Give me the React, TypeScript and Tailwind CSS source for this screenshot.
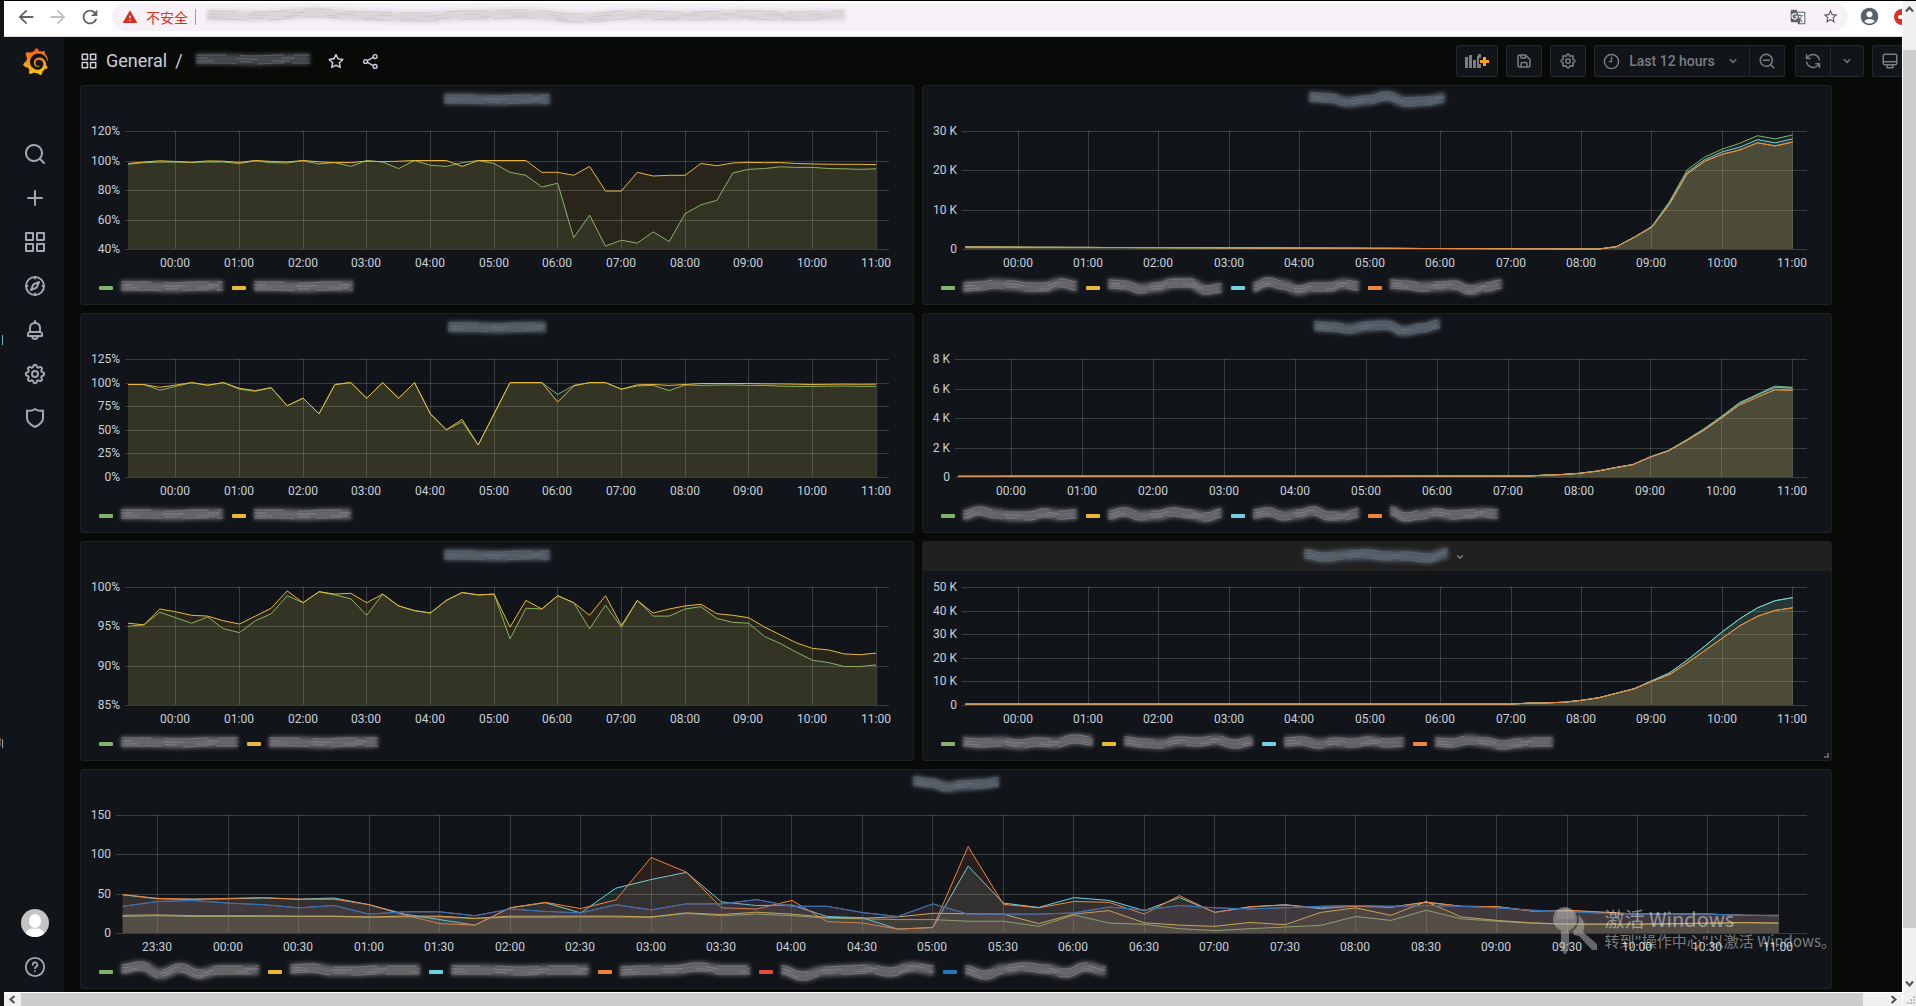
import React, { useLayoutEffect, useRef, useState } from 'react';
import {
  MdAccountCircle,
  MdArrowBack,
  MdArrowForward,
  MdGTranslate,
  MdRefresh,
  MdStarBorder,
  MdWarning,
} from 'react-icons/md';
import { SiGrafana } from 'react-icons/si';

const GREEN = '#7eb26d';
const YELLOW = '#eab839';
const CYAN = '#6ed0e0';
const ORANGE = '#ef843c';
const RED = '#e24d42';
const BLUE = '#1f78c1';

// Every series has one point per 15 minutes, 23:15 to 11:00
const FIRST_POINT = -0.75;
const RANGE_START = -0.797;
const RANGE_HOURS = 12;

type Series = { color: string; values: number[] };
type Tick = { value: number; label: string };
type LegendItem = { color: string; width: number; wave?: number[] };

type PanelConfig = {
  id: string;
  titleWidth: number;
  titleWave?: number[];
  hovered?: boolean;
  left: number;
  min: number;
  max: number;
  ticks: Tick[];
  step?: number;
  series: Series[];
  legend: LegendItem[];
};

const slope = (count: number, from: number, to: number) =>
  Array.from({ length: count }, (_, i) => from + ((to - from) * i) / (count - 1));

const percent = (values: number[]): Tick[] => values.map((value) => ({ value, label: `${value}%` }));
const kilo = (values: number[]): Tick[] =>
  values.map((value) => ({ value, label: value === 0 ? '0' : `${value} K` }));

const rateGreen = [
  97.5, 98.5, 98.9, 98.9, 98.7, 99, 99, 98, 99.8, 98.5, 98.4, 99.8, 97.7, 98.6, 96, 100, 99, 94.5, 100, 96.8, 96, 98.6,
  100, 98, 92, 90, 82, 84.6, 47.6, 63, 42, 46, 44, 51.6, 45, 64, 70, 73, 91.6, 94, 94.6, 95.7, 95.3, 95.3, 94.6, 94.4,
  94, 94.4,
];
const rateYellow = [
  98, 99, 99.8, 99.3, 98.8, 99.7, 99.5, 98.7, 100, 99.4, 99, 100, 99.1, 98.6, 98.6, 99.6, 99.2, 99.5, 100, 100, 100, 96,
  100, 100, 100, 100, 92, 92, 90, 96, 79.3, 79.3, 92, 89.5, 90, 90, 98, 96.5, 98.3, 98.7, 98.5, 98.6, 98, 97.7, 97.5,
  97.4, 97.4, 97.3,
];

const callGreen = [
  98, 98, 92, 96, 100, 97, 100, 93, 90.8, 94.6, 75.5, 83.5, 67, 98, 100, 83.5, 100, 83.5, 100, 67, 50, 58.5, 34, 67, 100,
  100, 100, 87.5, 97, 100, 100, 93, 96.5, 97, 91.5, 97.5, 97, 97.5, 97.5, 97, 97, 96.3, 96, 96, 96.2, 96.4, 96, 96.2,
];
const callYellow = [
  98, 98, 95, 97.5, 100, 97.4, 100, 94, 91.5, 94.6, 75.5, 83.5, 67, 98, 100, 83.5, 100, 83.5, 100, 67, 50, 61, 34, 67,
  100, 100, 100, 79.5, 96.5, 100, 100, 93, 97.7, 98, 97, 98, 99, 99, 99, 99, 98.7, 98.6, 98.3, 98, 98.2, 98.4, 98.2, 98.4,
];

const lossGreen = [
  95, 95.2, 96.8, 96.1, 95.4, 96.2, 94.7, 94.2, 95.7, 96.6, 98.9, 98, 99.4, 99, 98.5, 96.4, 99.1, 97.6, 97, 96.7, 98.3,
  99.3, 99, 99.1, 93.4, 97.3, 97.2, 98.9, 98, 94.7, 97.7, 94.9, 98.3, 96.3, 96.3, 97.2, 97.5, 96, 95.5, 95.4, 93.7, 92.8,
  91.7, 90.7, 90.4, 89.9, 89.9, 90.1,
];
const lossYellow = [
  95.4, 95.2, 97.2, 96.85, 96.4, 96.3, 95.7, 95.3, 96.3, 97.3, 99.5, 98, 99.4, 99.1, 99.2, 98, 99.1, 97.6, 97, 96.7,
  98.3, 99.3, 99, 99.1, 94.9, 98.3, 97.2, 98.9, 98, 96.4, 98.9, 95.1, 98.3, 96.7, 97.2, 97.6, 97.8, 96.6, 96.4, 96.1,
  94.9, 93.9, 92.9, 92.2, 92, 91.5, 91.4, 91.6,
];

const usersHead = [...slope(37, 0.5, 0), 0.6, 3];
const usersLow = [...usersHead, 5.6, 11.4, 19.1, 22.3, 24.1, 25.2, 27, 26.2, 27.2];
const usersMid = [...usersHead, 5.6, 11.7, 19.5, 22.7, 24.7, 25.9, 27.8, 27, 28];
const usersHigh = [...usersHead, 5.8, 12.1, 20.1, 23.4, 25.4, 26.9, 28.8, 28, 29];

const roomsHead = [...slope(33, 0.05, 0.06), 0.12, 0.17, 0.25, 0.4, 0.63, 0.84];
const roomsLow = [...roomsHead, 1.36, 1.76, 2.44, 3.16, 4, 4.88, 5.4, 5.92, 5.88];
const roomsMid = [...roomsHead, 1.36, 1.78, 2.48, 3.22, 4.08, 4.98, 5.54, 6.08, 6.02];
const roomsHigh = [...roomsHead, 1.38, 1.8, 2.5, 3.26, 4.12, 5.04, 5.6, 6.16, 6.08];

const linksHead = [...slope(32, 0.4, 0.4), 0.8, 0.9, 1.2, 2, 3.1, 5, 6.9];
const linksLow = [...linksHead, 10, 12.9, 17.8, 23, 28.3, 33.6, 37.6, 40.1, 41.2];
const linksHigh = [...linksHead, 10.3, 13.6, 19, 24.9, 31, 36.6, 41.2, 44.2, 45.5];

const delayGreen = [
  21, 22, 21, 21, 21, 21, 21, 20, 20.5, 20.5, 18.5, 20, 20, 20.5, 20.5, 20, 25, 22, 24, 22, 19, 18, 17, 17, 15, 15, 8.5,
  23, 12.7, 11, 5.5, 3, 5.5, 7.6, 9.7, 21, 16, 29, 18, 15, 12.5, 11, 11, 11, 11.5, 12.2, 13, 12.5,
];
const delayYellow = [
  22.5, 23, 22, 22, 22, 21.5, 21.5, 20.5, 21.5, 21.5, 18.5, 21.5, 21.5, 21.5, 21.5, 20.5, 25.5, 23.5, 26.5, 24, 20, 19,
  20.5, 25, 24.5, 24, 12, 24, 28.5, 13, 10, 8.5, 13.5, 10.5, 26, 32, 22.5, 40, 20.5, 16, 13, 11.5, 11.5, 11.5, 12, 12.7,
  13.5, 12.7,
];
const delayCyan = [
  48.5, 43.5, 43, 43.5, 44.5, 43, 44.5, 36, 24, 17, 10, 32, 38.5, 25.5, 57, 68, 77, 39.5, 35, 35.5, 21, 19.5, 5, 7, 85,
  38, 32.5, 45, 41.5, 28.5, 45, 26.5, 33, 36, 31, 34.5, 33, 39, 34, 33.5, 28, 28.5, 26, 24, 24, 24, 22.5, 22,
];
const delayOrange = [
  49, 44, 43, 44, 45, 43, 43, 36, 23, 12, 10, 32, 39, 31, 42, 96, 77.5, 32, 30.5, 41.5, 14.5, 12.7, 5, 7, 110, 36.5, 32,
  40, 39, 24, 47.5, 26, 33.5, 35.6, 32, 34, 32.6, 39.4, 34, 33.5, 28, 29, 26.7, 24, 24, 24, 22.5, 22,
];
const delayBlue = [
  34, 40, 41.5, 38, 36, 32, 35, 24, 27, 27, 22, 30.5, 27.5, 25.5, 36, 29.5, 37, 37, 42.5, 34, 34, 26, 21, 37, 24, 24, 24,
  25.5, 33, 29, 35, 32, 30.5, 32, 34, 35, 34, 35, 34, 32, 29, 27.5, 25, 24, 24, 24, 22.5, 22.5,
];

const panels: PanelConfig[] = [
  {
    id: 'rate',
    titleWidth: 108,
    left: 45,
    min: 40,
    max: 120,
    ticks: percent([40, 60, 80, 100, 120]),
    series: [
      { color: GREEN, values: rateGreen },
      { color: YELLOW, values: rateYellow },
    ],
    legend: [
      { color: GREEN, width: 104 },
      { color: YELLOW, width: 101 },
    ],
  },
  {
    id: 'users',
    titleWidth: 138,
    titleWave: [-2, -1, 3, 1, -3, 3, 2, -1],
    left: 40,
    min: 0,
    max: 30,
    ticks: kilo([0, 10, 20, 30]),
    series: [
      { color: GREEN, values: usersHigh },
      { color: YELLOW, values: usersLow },
      { color: CYAN, values: usersMid },
      { color: ORANGE, values: usersLow },
    ],
    legend: [
      { color: GREEN, width: 116, wave: [1, 0, -2, -1, 1, 1, -3, 0] },
      { color: YELLOW, width: 116, wave: [-2, -1, 3, 1, -3, -3, 4, 2] },
      { color: CYAN, width: 108, wave: [1, -4, -1, 4, 1, 1, -2, 0] },
      { color: ORANGE, width: 114, wave: [-2, -1, 1, 0, -1, 4, 1, -2] },
    ],
  },
  {
    id: 'call',
    titleWidth: 100,
    left: 45,
    min: 0,
    max: 125,
    ticks: percent([0, 25, 50, 75, 100, 125]),
    series: [
      { color: GREEN, values: callGreen },
      { color: YELLOW, values: callYellow },
    ],
    legend: [
      { color: GREEN, width: 104 },
      { color: YELLOW, width: 99 },
    ],
  },
  {
    id: 'rooms',
    titleWidth: 128,
    titleWave: [-1, 0, 2, -1, -2, 4, 1, -3],
    left: 33,
    min: 0,
    max: 8,
    ticks: kilo([0, 2, 4, 6, 8]),
    series: [
      { color: GREEN, values: roomsHigh },
      { color: YELLOW, values: roomsLow },
      { color: CYAN, values: roomsMid },
      { color: ORANGE, values: roomsLow },
    ],
    legend: [
      { color: GREEN, width: 116, wave: [1, -3, 0, 2, 2, -1, 1, 0] },
      { color: YELLOW, width: 116, wave: [1, -2, 2, 1, -2, 0, 3, -1] },
      { color: CYAN, width: 108, wave: [0, -2, 2, 0, -3, 2, 2, -1] },
      { color: ORANGE, width: 110, wave: [-3, 3, 1, -1, 1, 0, -1, 0] },
    ],
  },
  {
    id: 'loss',
    titleWidth: 108,
    left: 45,
    min: 85,
    max: 100,
    ticks: percent([85, 90, 95, 100]),
    series: [
      { color: GREEN, values: lossGreen },
      { color: YELLOW, values: lossYellow },
    ],
    legend: [
      { color: GREEN, width: 119 },
      { color: YELLOW, width: 111 },
    ],
  },
  {
    id: 'links',
    titleWidth: 146,
    titleWave: [-1, 2, 0, -1, 1, 1, 3, -2],
    hovered: true,
    left: 40,
    min: 0,
    max: 50,
    ticks: kilo([0, 10, 20, 30, 40, 50]),
    series: [
      { color: GREEN, values: linksHigh },
      { color: YELLOW, values: linksLow },
      { color: CYAN, values: linksHigh },
      { color: ORANGE, values: linksLow },
    ],
    legend: [
      { color: GREEN, width: 132, wave: [0, 1, 0, 2, 0, 1, -3, -1] },
      { color: YELLOW, width: 131, wave: [-1, 1, 2, -1, 0, -2, 2, -1] },
      { color: CYAN, width: 122, wave: [0, -1, 2, 0, 1, -1, 1, 0] },
      { color: ORANGE, width: 120, wave: [0, 1, -2, 0, 3, 1, 0, 0] },
    ],
  },
  {
    id: 'delay',
    titleWidth: 88,
    titleWave: [-2, 0, 4, 2, 1, -1],
    left: 36,
    min: 0,
    max: 150,
    ticks: [0, 50, 100, 150].map((value) => ({ value, label: String(value) })),
    step: 0.5,
    series: [
      { color: GREEN, values: delayGreen },
      { color: YELLOW, values: delayYellow },
      { color: CYAN, values: delayCyan },
      { color: ORANGE, values: delayOrange },
      { color: RED, values: delayBlue },
      { color: BLUE, values: delayBlue },
    ],
    legend: [
      { color: GREEN, width: 140, wave: [-1, -4, 4, -2, 4, 0, 0, 0] },
      { color: YELLOW, width: 132, wave: [-1, -2, 1, 1, 0, 0, 0] },
      { color: CYAN, width: 140 },
      { color: ORANGE, width: 132, wave: [1, 0, 0, -3, 0, 0] },
      { color: RED, width: 155, wave: [0, 6, 1, 0, -1, 2, -3, 0] },
      { color: BLUE, width: 143, wave: [0, 5, -1, -3, -1, 3, -3, 1] },
    ],
  },
];

/* ---------- Smudged-out names ---------- */

const smearTones = {
  legend: { body: '#68676b', streak: '#a09fa3' },
  title: { body: '#56606a', streak: '#737d86' },
  crumb: { body: '#464a50', streak: '#8a9097' },
  url: { body: '#d9d5d9', streak: '#b9b6b9' },
};

function Smear({
  width,
  wave = [0, 0, 1, 0, 0],
  tone = 'legend',
}: {
  width: number;
  wave?: number[];
  tone?: keyof typeof smearTones;
}) {
  const { body, streak } = smearTones[tone];
  const from = 1;
  const gap = (width - from * 2) / (wave.length - 1);
  const line = (dy: number) => {
    const points = wave.map((y, i) => [from + i * gap, 6 + y + dy]);
    let d = `M${points[0][0]},${points[0][1]}`;
    for (let i = 1; i < points.length; i++) {
      const [px, py] = points[i - 1];
      const [x, y] = points[i];
      d += ` C${px + gap / 2},${py} ${x - gap / 2},${y} ${x},${y}`;
    }
    return d;
  };

  return (
    <svg width={width} height={16} className="shrink-0 overflow-visible" fill="none" aria-hidden="true">
      <path d={line(0)} stroke={body} strokeWidth={11} className="blur-[2px]" />
      <g stroke={streak} strokeWidth={1} opacity={0.5} className="blur-[0.5px]">
        <path d={line(-4)} strokeDasharray="30 14 44 9" />
        <path d={line(-1)} strokeDasharray="12 30 20 24" />
        <path d={line(2)} strokeDasharray="18 26 12 20" />
        <path d={line(4)} strokeDasharray="40 22 26 8" />
      </g>
    </svg>
  );
}

/* ---------- Icons ---------- */

const iconPaths = {
  apps: 'M10,13H3a1,1,0,0,0-1,1v7a1,1,0,0,0,1,1h7a1,1,0,0,0,1-1V14A1,1,0,0,0,10,13ZM9,20H4V15H9ZM21,2H14a1,1,0,0,0-1,1v7a1,1,0,0,0,1,1h7a1,1,0,0,0,1-1V3A1,1,0,0,0,21,2ZM20,9H15V4h5Zm1,4H14a1,1,0,0,0-1,1v7a1,1,0,0,0,1,1h7a1,1,0,0,0,1-1V14A1,1,0,0,0,21,13Zm-1,7H15V15h5ZM10,2H3A1,1,0,0,0,2,3v7a1,1,0,0,0,1,1h7a1,1,0,0,0,1-1V3A1,1,0,0,0,10,2ZM9,9H4V4H9Z',
  plus: 'M19,11H13V5a1,1,0,0,0-2,0v6H5a1,1,0,0,0,0,2h6v6a1,1,0,0,0,2,0V13h6a1,1,0,0,0,0-2Z',
  search:
    'M21.71,20.29,18,16.61A9,9,0,1,0,16.61,18l3.68,3.68a1,1,0,0,0,1.42,0A1,1,0,0,0,21.71,20.29ZM11,18a7,7,0,1,1,7-7A7,7,0,0,1,11,18Z',
  searchMinus:
    'M21.71,20.29,18,16.61A9,9,0,1,0,16.61,18l3.68,3.68a1,1,0,0,0,1.42,0A1,1,0,0,0,21.71,20.29ZM11,18a7,7,0,1,1,7-7A7,7,0,0,1,11,18ZM15,10H7a1,1,0,0,0,0,2h8a1,1,0,0,0,0-2Z',
  star: 'M22,9.67A1,1,0,0,0,21.14,9l-5.69-.83L12.9,3a1,1,0,0,0-1.8,0L8.55,8.16,2.86,9a1,1,0,0,0-.81.68,1,1,0,0,0,.25,1l4.13,4-1,5.68A1,1,0,0,0,6.9,21.44L12,18.77l5.1,2.67a.93.93,0,0,0,.46.12,1,1,0,0,0,.59-.19,1,1,0,0,0,.4-1l-1-5.68,4.13-4A1,1,0,0,0,22,9.67Zm-6.15,4a1,1,0,0,0-.29.88l.72,4.2-3.76-2a1.06,1.06,0,0,0-.94,0l-3.76,2,.72-4.2a1,1,0,0,0-.29-.88l-3-3,4.21-.61a1,1,0,0,0,.76-.55L12,5.7l1.88,3.82a1,1,0,0,0,.76.55l4.21.61Z',
  angleDown:
    'M17,9.17a1,1,0,0,0-1.41,0L12,12.71,8.46,9.17a1,1,0,0,0-1.41,0,1,1,0,0,0,0,1.42l4.24,4.24a1,1,0,0,0,1.42,0L17,10.59A1,1,0,0,0,17,9.17Z',
  bell: 'M18,13.18V10a6,6,0,0,0-5-5.91V3a1,1,0,0,0-2,0V4.09A6,6,0,0,0,6,10v3.18A3,3,0,0,0,4,16v2a1,1,0,0,0,1,1H8.14a4,4,0,0,0,7.72,0H19a1,1,0,0,0,1-1V16A3,3,0,0,0,18,13.18ZM8,10a4,4,0,0,1,8,0v3H8Zm4,10a2,2,0,0,1-1.72-1h3.44A2,2,0,0,1,12,20Zm6-3H6V16a1,1,0,0,1,1-1H17a1,1,0,0,1,1,1Z',
  save: 'M20.71,9.29l-6-6a1,1,0,0,0-.32-.21A1.09,1.09,0,0,0,14,3H6A3,3,0,0,0,3,6V18a3,3,0,0,0,3,3H18a3,3,0,0,0,3-3V10A1,1,0,0,0,20.71,9.29ZM9,5h4V7H9Zm6,14H9V16a1,1,0,0,1,1-1h4a1,1,0,0,1,1,1Zm4-1a1,1,0,0,1-1,1H17V16a3,3,0,0,0-3-3H10a3,3,0,0,0-3,3v3H6a1,1,0,0,1-1-1V6A1,1,0,0,1,6,5H7V8A1,1,0,0,0,8,9h6a1,1,0,0,0,1-1V6.41l4,4Z',
  monitor:
    'M19,2H5A3,3,0,0,0,2,5V15a3,3,0,0,0,3,3H7.64l-.58,1a2,2,0,0,0,0,2,2,2,0,0,0,1.75,1h6.46A2,2,0,0,0,17,21a2,2,0,0,0,0-2l-.59-1H19a3,3,0,0,0,3-3V5A3,3,0,0,0,19,2ZM8.77,20,10,18H14l1.2,2ZM20,15a1,1,0,0,1-1,1H5a1,1,0,0,1-1-1V14H20Zm0-3H4V5A1,1,0,0,1,5,4H19a1,1,0,0,1,1,1Z',
};

function Icon({ name, size }: { name: keyof typeof iconPaths; size: number }) {
  return (
    <svg width={size} height={size} viewBox="0 0 24 24" fill="currentColor" aria-hidden="true">
      <path d={iconPaths[name]} />
    </svg>
  );
}

function StrokeIcon({ size, children }: { size: number; children: React.ReactNode }) {
  return (
    <svg
      width={size}
      height={size}
      viewBox="0 0 24 24"
      fill="none"
      stroke="currentColor"
      strokeWidth={2}
      strokeLinecap="round"
      strokeLinejoin="round"
      aria-hidden="true"
    >
      {children}
    </svg>
  );
}

// Eight round lobes
const cogPath = (() => {
  const points: string[] = [];
  for (let a = 0; a < 360; a += 5) {
    const rad = (a * Math.PI) / 180;
    const wave = Math.cos(rad * 8);
    const r = 8.1 + Math.sign(wave) * Math.sqrt(Math.abs(wave)) * 1.1;
    points.push(`${(12 + r * Math.cos(rad)).toFixed(2)},${(12 + r * Math.sin(rad)).toFixed(2)}`);
  }
  return `M${points.join('L')}Z`;
})();

const CogIcon = ({ size }: { size: number }) => (
  <StrokeIcon size={size}>
    <path d={cogPath} />
    <circle cx="12" cy="12" r="3" />
  </StrokeIcon>
);

const CompassIcon = ({ size }: { size: number }) => (
  <StrokeIcon size={size}>
    <circle cx="12" cy="12" r="9" />
    <path d="M16 8l-2.4 5.6L8 16l2.4-5.6z" />
    <path d="M12 3v1.5M12 19.5V21M3 12h1.5M19.5 12H21" />
  </StrokeIcon>
);

const ShieldIcon = ({ size }: { size: number }) => (
  <StrokeIcon size={size}>
    <path d="M12 3C10 4.600 7 5.100 4 4.500V12c0 4.200 3.200 6.800 8 9 4.800-2.200 8-4.800 8-9V4.500C17 5.100 14 4.600 12 3z" />
  </StrokeIcon>
);

const ShareIcon = ({ size }: { size: number }) => (
  <StrokeIcon size={size}>
    <circle cx="18.500" cy="5" r="2.700" />
    <circle cx="5" cy="12" r="2.700" />
    <circle cx="18.500" cy="19" r="2.700" />
    <path d="M7.500 10.700l8.500-4.400M7.500 13.300l8.500 4.400" />
  </StrokeIcon>
);

const ClockIcon = ({ size }: { size: number }) => (
  <StrokeIcon size={size}>
    <circle cx="12" cy="12" r="10" />
    <path d="M12 6v6H9" />
  </StrokeIcon>
);

const SyncIcon = ({ size }: { size: number }) => (
  <StrokeIcon size={size}>
    <path d="M20.500 10.500A9 9 0 0 0 5 6.500L3.500 8.500M3.300 3.500v5h5" />
    <path d="M3.500 13.500A9 9 0 0 0 19 17.500l1.500-2M20.700 20.500v-5h-5" />
  </StrokeIcon>
);

const HelpIcon = ({ size }: { size: number }) => (
  <StrokeIcon size={size}>
    <circle cx="12" cy="12" r="10" />
    <path d="M9.500 9.500a2.500 2.500 0 1 1 3.700 2.200c-.8.400-1.200.9-1.200 1.600M12 16.500v.1" />
  </StrokeIcon>
);

const AddPanelIcon = () => (
  <svg width={26} height={16} viewBox="0 0 26 16" aria-hidden="true">
    <g fill="#7b7d81">
      <rect x="1" y="4" width="3" height="11" />
      <rect x="5" y="2" width="3" height="13" />
      <rect x="9" y="7" width="3" height="8" />
      <path d="M13 3h1v-2h3v4h-2v6h2v4h-4z" />
    </g>
    <path d="M19 4h3v3h3v3h-3v3h-3v-3h-3V7h3z" fill="#f9a01b" />
  </svg>
);

const AvatarIcon = () => (
  <svg width={28} height={28} viewBox="0 0 28 28" className="rounded-full" aria-hidden="true">
    <rect width="28" height="28" fill="#c4c4c4" />
    <ellipse cx="14" cy="12" rx="6" ry="7" fill="#fff" />
    <path d="M4 28c0-6 4-8 7-8.500h6c3 .5 7 2.500 7 8.500z" fill="#fff" />
  </svg>
);

/* ---------- Chart ---------- */

const PLOT_TOP = 16;
const PLOT_HEIGHT = 118;
const PLOT_BOTTOM = PLOT_TOP + PLOT_HEIGHT;

function formatTime(hours: number) {
  const minutes = Math.round((hours + 24) * 60) % (24 * 60);
  const h = String(Math.floor(minutes / 60)).padStart(2, '0');
  const m = String(minutes % 60).padStart(2, '0');
  return `${h}:${m}`;
}

function Chart({ panel }: { panel: PanelConfig }) {
  const { min, max, ticks, series, step = 1 } = panel;
  const ref = useRef<HTMLDivElement>(null);
  const [width, setWidth] = useState(832);

  useLayoutEffect(() => {
    const el = ref.current;
    if (!el) return;
    const measure = () => setWidth(el.clientWidth);
    measure();
    const observer = new ResizeObserver(measure);
    observer.observe(el);
    return () => observer.disconnect();
  }, []);

  const left = panel.left - 1;
  const right = width - 24;
  const toX = (hours: number) => left + ((hours - RANGE_START) / RANGE_HOURS) * (right - left);
  const toY = (value: number) => PLOT_BOTTOM - ((value - min) / (max - min)) * PLOT_HEIGHT;

  const times: number[] = [];
  for (let t = step === 1 ? 0 : -0.5; t <= 11; t += step) times.push(t);

  return (
    <div ref={ref} className="min-w-0">
      <svg width={width} height={160} className="block font-[Roboto,sans-serif] text-xs" role="img" aria-label={panel.id}>
        <g stroke="#ffffff" strokeOpacity={0.18} shapeRendering="crispEdges">
          {ticks.map((tick) => {
            const y = Math.round(toY(tick.value)) + 0.5;
            return <line key={tick.value} x1={left} x2={right} y1={y} y2={y} />;
          })}
          {times.map((t) => {
            const x = Math.floor(toX(t)) + 0.5;
            return <line key={t} x1={x} x2={x} y1={PLOT_TOP} y2={PLOT_BOTTOM} />;
          })}
        </g>
        {series.map(({ color, values }, i) => {
          const points = values.map((v, n) => `${toX(FIRST_POINT + n * 0.25).toFixed(1)},${toY(v).toFixed(1)}`);
          const start = toX(FIRST_POINT).toFixed(1);
          const end = toX(11).toFixed(1);
          return (
            <g key={i}>
              <polygon
                points={`${start},${PLOT_BOTTOM} ${points.join(' ')} ${end},${PLOT_BOTTOM}`}
                fill={color}
                fillOpacity={0.11}
              />
              <polyline points={points.join(' ')} fill="none" stroke={color} strokeWidth={1} />
            </g>
          );
        })}
        <g fill="#c7d0d9">
          {ticks.map((tick) => (
            <text key={tick.value} x={left - 5} y={Math.round(toY(tick.value)) + 4} textAnchor="end">
              {tick.label}
            </text>
          ))}
          {times.map((t) => (
            <text key={t} x={Math.floor(toX(t))} y={PLOT_BOTTOM + 18} textAnchor="middle">
              {formatTime(t)}
            </text>
          ))}
        </g>
      </svg>
    </div>
  );
}

function Panel({ panel, className = '' }: { panel: PanelConfig; className?: string }) {
  return (
    <section className={`relative min-w-0 rounded-[3px] border border-[#1e2023] bg-[#111418] pb-[3px] ${className}`}>
      <header
        className={`flex h-[29px] items-center justify-center gap-1 text-[#8e8e8e] ${panel.hovered ? 'bg-[#202020] pl-4' : ''}`}
      >
        <Smear width={panel.titleWidth} wave={panel.titleWave} tone="title" />
        {panel.hovered && <Icon name="angleDown" size={14} />}
      </header>
      <Chart panel={panel} />
      <ul className="flex h-[26px] items-center gap-2 pl-[18px]">
        {panel.legend.map((item) => (
          <li key={item.color} className="flex items-center gap-[7px]">
            <span className="h-1 w-[14px] rounded-[1px]" style={{ backgroundColor: item.color }} />
            <Smear width={item.width} wave={item.wave} />
          </li>
        ))}
      </ul>
      {panel.hovered && (
        <span className="absolute right-[2px] bottom-[2px] h-[5px] w-[5px] border-r-2 border-b-2 border-[#5c5d60]" />
      )}
    </section>
  );
}

/* ---------- Page chrome ---------- */

function BrowserBar() {
  return (
    <div className="flex h-9 items-center border-b border-[#dcdade] bg-white pb-1">
      <div className="flex w-[108px] shrink-0 items-center gap-[10px] pl-[11px] text-[#5f6368]">
        <button type="button" aria-label="Back">
          <MdArrowBack size={22} />
        </button>
        <button type="button" aria-label="Forward" className="text-[#bdbfc1]">
          <MdArrowForward size={22} />
        </button>
        <button type="button" aria-label="Reload">
          <MdRefresh size={22} />
        </button>
      </div>
      <div className="flex h-7 min-w-0 flex-1 items-center rounded-full bg-[#f7f2f7] pr-[9px] pl-[10px]">
        <MdWarning size={16} className="text-[#d93025]" />
        <span className="ml-2 font-['Noto_Sans_CJK_SC',sans-serif] text-sm leading-5 text-[#d93025]">不安全</span>
        <span className="mr-[10px] ml-[7px] h-4 w-px bg-[#9a9b9e]" />
        <Smear width={640} wave={[0, 1, -2, 1, 2, 0, -1, 3, 0, 1, 0, 1, 0]} tone="url" />
        <div className="ml-auto flex items-center gap-4 text-[#5f6368]">
          <button type="button" aria-label="Translate">
            <MdGTranslate size={16} />
          </button>
          <button type="button" aria-label="Bookmark">
            <MdStarBorder size={17} />
          </button>
        </div>
      </div>
      <div className="flex w-[54px] shrink-0 items-center justify-between overflow-hidden pl-[11px]">
        <button type="button" aria-label="Profile" className="text-[#5a6169]">
          <MdAccountCircle size={21} />
        </button>
        <button type="button" aria-label="Update" className="h-4 w-2 rounded-l-full bg-[#d93025] pl-1">
          <span className="block h-1 w-1 rounded-l-full bg-white" />
        </button>
      </div>
    </div>
  );
}

function Sidebar() {
  const items = [
    { label: 'Search', icon: <Icon name="search" size={24} /> },
    { label: 'Create', icon: <Icon name="plus" size={24} /> },
    { label: 'Dashboards', icon: <Icon name="apps" size={24} /> },
    { label: 'Explore', icon: <CompassIcon size={24} /> },
    { label: 'Alerting', icon: <Icon name="bell" size={24} /> },
    { label: 'Configuration', icon: <CogIcon size={24} /> },
    { label: 'Server admin', icon: <ShieldIcon size={24} /> },
  ];

  return (
    <nav className="flex w-[60px] shrink-0 flex-col items-center bg-[#111418] pb-[3px] pl-[2px] text-[#9fa7b3]">
      <a href="#home" aria-label="Home" className="flex h-[95px] items-start pt-[11px]">
        <svg width={0} height={0} aria-hidden="true">
          <defs>
            <linearGradient id="logo-gradient" x1="0" y1="0" x2="0" y2="1">
              <stop offset="0" stopColor="#f05a28" />
              <stop offset="1" stopColor="#fbca0a" />
            </linearGradient>
          </defs>
        </svg>
        <SiGrafana size={27} fill="url(#logo-gradient)" />
      </a>
      {items.map((item) => (
        <button key={item.label} type="button" aria-label={item.label} className="flex h-11 w-full items-center justify-center">
          {item.icon}
        </button>
      ))}
      <button type="button" aria-label="Profile" className="mt-auto flex h-11 w-full items-center justify-center">
        <AvatarIcon />
      </button>
      <button type="button" aria-label="Help" className="flex h-11 w-full items-center justify-center">
        <HelpIcon size={22} />
      </button>
    </nav>
  );
}

const toolButton =
  'flex h-8 shrink-0 items-center justify-center border border-[#25272c] bg-[#111418] text-[#7b7d81]';

function Toolbar() {
  return (
    <div className="flex h-12 items-center text-[#ccccdc]">
      <Icon name="apps" size={18} />
      <a href="#general" className="ml-2 font-[Roboto,sans-serif] text-lg leading-6">
        General
      </a>
      <span className="mr-3 ml-2 font-[Roboto,sans-serif] text-lg leading-6">/</span>
      <Smear width={116} tone="crumb" />
      <button type="button" aria-label="Mark as favorite" className="ml-4">
        <Icon name="star" size={18} />
      </button>
      <button type="button" aria-label="Share" className="ml-[17px]">
        <ShareIcon size={17} />
      </button>

      <div className="ml-auto flex items-center gap-2">
        <button type="button" aria-label="Add panel" className={`${toolButton} w-[42px] rounded-[2px]`}>
          <AddPanelIcon />
        </button>
        <button type="button" aria-label="Save dashboard" className={`${toolButton} w-9 rounded-[2px]`}>
          <Icon name="save" size={18} />
        </button>
        <button type="button" aria-label="Dashboard settings" className={`${toolButton} w-9 rounded-[2px]`}>
          <CogIcon size={18} />
        </button>
        <div className="flex">
          <button
            type="button"
            className={`${toolButton} w-[156px] rounded-l-[2px] font-[Roboto,sans-serif] text-sm font-medium`}
          >
            <ClockIcon size={17} />
            <span className="mr-[10px] ml-[9px]">Last 12 hours</span>
            <Icon name="angleDown" size={16} />
          </button>
          <button type="button" aria-label="Zoom out" className={`${toolButton} -ml-px w-9 rounded-r-[2px]`}>
            <Icon name="searchMinus" size={18} />
          </button>
        </div>
        <div className="ml-[2px] flex">
          <button type="button" aria-label="Refresh" className={`${toolButton} w-9 rounded-l-[2px]`}>
            <SyncIcon size={18} />
          </button>
          <button type="button" aria-label="Refresh interval" className={`${toolButton} -ml-px w-[34px] rounded-r-[2px]`}>
            <Icon name="angleDown" size={16} />
          </button>
        </div>
        <button
          type="button"
          aria-label="Cycle view mode"
          className={`${toolButton} w-[30px] rounded-l-[2px] border-r-0 pl-[5px]`}
        >
          <Icon name="monitor" size={18} />
        </button>
      </div>
    </div>
  );
}

const ScrollArrow = ({ d }: { d: string }) => (
  <svg width={9} height={9} viewBox="0 0 9 9" fill="none" stroke="#505050" strokeWidth={2} aria-hidden="true">
    <path d={d} />
  </svg>
);

function WindowsWatermark() {
  return (
    <div className="pointer-events-none absolute -right-1 bottom-[34px] flex gap-[6px] font-['Noto_Sans_CJK_SC',sans-serif] whitespace-nowrap text-white/45">
      <svg width={46} height={48} viewBox="0 0 46 48" aria-hidden="true">
        <g fill="#b9b9b9" fillOpacity={0.5}>
          <circle cx="12" cy="12" r="12" />
          <path d="M8 24h8v16l-3 7h-2l-3-7z" />
          <path d="M25 8c6 4 8 10 5 17l14 12v6h-5L26 29l-5-1-1-4c5-4 7-9 5-16z" />
        </g>
        <path d="M3 10a9 9 0 0 1 18 0v2H3z" fill="#fff" fillOpacity={0.12} />
      </svg>
      <div>
        <p className="text-xl leading-6">激活 Windows</p>
        <p className="text-[15px] leading-5">转到"操作中心"以激活 Windows。</p>
      </div>
    </div>
  );
}

export default function App() {
  return (
    <div className="flex min-h-screen border-t border-black bg-[#131313]">
      <div className="relative w-1 shrink-0">
        <span className="absolute top-[334px] right-px h-[10px] w-px bg-[#5fb6cf]" />
        <span className="absolute top-[738px] right-px h-[9px] w-px bg-[#5fb6cf]" />
        <span className="absolute top-[737px] left-0 h-2 w-px bg-[#7a4a2a]" />
      </div>

      <div className="flex min-w-0 flex-1 flex-col">
        <BrowserBar />
        <div className="flex flex-1">
          <Sidebar />
          <main className="min-w-0 flex-1 bg-[#080a08] pb-[3px] pl-4">
            <Toolbar />
            <div className="relative mr-[70px] grid grid-cols-[834fr_910fr] gap-2">
              {panels.map((panel) => (
                <Panel key={panel.id} panel={panel} className={panel.id === 'delay' ? 'col-span-2' : ''} />
              ))}
              <WindowsWatermark />
            </div>
          </main>
        </div>
        <div className="flex h-[14px] items-stretch border-t border-white bg-[#f0f0f0]">
          <button type="button" aria-label="Scroll left" className="flex w-[17px] items-center justify-center">
            <ScrollArrow d="M6.500 1L2.500 4.500l4 3.500" />
          </button>
          <div className="flex-1 bg-[#cdcdcd]" />
          <button type="button" aria-label="Scroll right" className="flex w-[39px] items-center justify-end pr-1">
            <ScrollArrow d="M2.500 1l4 3.500-4 3.500" />
          </button>
        </div>
      </div>

      <div className="flex w-[14px] shrink-0 flex-col border-l border-white bg-[#f0f0f0]">
        <button type="button" aria-label="Scroll up" className="flex h-[49px] items-start justify-center pt-1">
          <ScrollArrow d="M1 6.500l3.500-4 3.500 4" />
        </button>
        <div className="flex-1 bg-[#cdcdcd]" />
        <button type="button" aria-label="Scroll down" className="flex h-[64px] items-end justify-center pb-1">
          <ScrollArrow d="M1 2.500l3.500 4 3.500-4" />
        </button>
        <svg width={13} height={14} viewBox="0 0 13 14" fill="#bdbdbd" aria-hidden="true">
          <path d="M10 4h2v2h-2zM10 7h2v2h-2zM7 7h2v2H7zM10 10h2v2h-2zM7 10h2v2H7zM4 10h2v2H4z" />
        </svg>
      </div>
    </div>
  );
}
